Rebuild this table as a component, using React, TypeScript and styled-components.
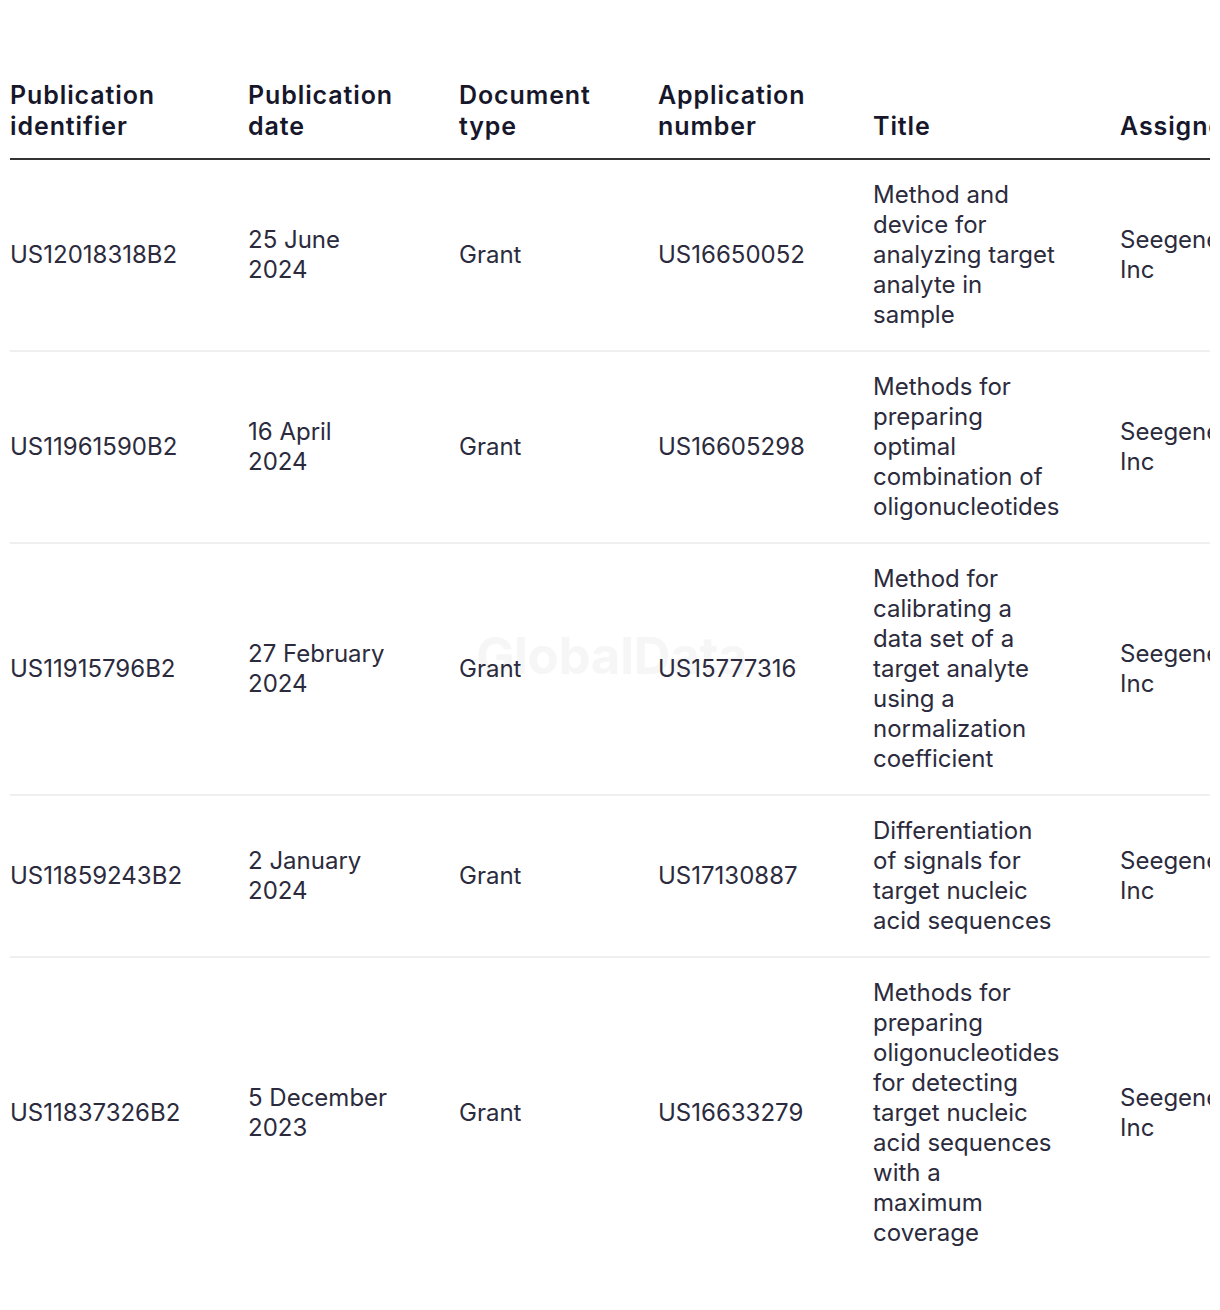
import React from "react";
import styled, { createGlobalStyle } from "styled-components";

const GlobalStyle = createGlobalStyle`
  html, body {
    margin: 0;
    padding: 0;
    background: #ffffff;
  }
  body {
    font-family: "Inter", "Liberation Sans", sans-serif;
    -webkit-font-smoothing: antialiased;
  }
`;

const Page = styled.div`
  position: relative;
  width: 1220px;
  padding: 80px 0 0 10px;
  box-sizing: border-box;
`;

const Scroller = styled.div`
  position: relative;
  width: 1200px;
  overflow: hidden;
`;

const Watermark = styled.div`
  position: absolute;
  left: 466px;
  top: 545px;
  font-family: "Inter", "Liberation Sans", sans-serif;
  font-weight: 700;
  font-size: 51px;
  letter-spacing: -0.3px;
  color: #f6f6f7;
  pointer-events: none;
  user-select: none;
  z-index: 0;
`;

const Table = styled.table`
  position: relative;
  z-index: 1;
  table-layout: fixed;
  border-collapse: collapse;
  width: 1310px;
`;

const Col = styled.col<{ $w: number }>`
  width: ${(p) => p.$w}px;
`;

const HeadCell = styled.th`
  text-align: left;
  vertical-align: bottom;
  padding: 0 40px 16px 0;
  font-size: 25px;
  line-height: 31px;
  font-weight: 600;
  letter-spacing: 0.9px;
  color: #17172b;
  border-bottom: 2px solid #333333;
`;

const Row = styled.tr`
  border-bottom: 2px solid #efefef;
  &:last-child {
    border-bottom: none;
  }
`;

const Cell = styled.td`
  vertical-align: middle;
  padding: 20px 62px 20px 0;
  font-size: 24px;
  line-height: 30px;
  font-weight: 400;
  color: #2b2b3d;
`;

const Line = styled.span`
  display: block;
  white-space: nowrap;
`;

type Patent = {
  id: string;
  date: string;
  type: string;
  app: string;
  title: string[];
  assignee: string;
};

const patents: Patent[] = [
  {
    id: "US12018318B2",
    date: "25 June 2024",
    type: "Grant",
    app: "US16650052",
    title: ["Method and", "device for", "analyzing target", "analyte in", "sample"],
    assignee: "Seegene Inc",
  },
  {
    id: "US11961590B2",
    date: "16 April 2024",
    type: "Grant",
    app: "US16605298",
    title: ["Methods for", "preparing", "optimal", "combination of", "oligonucleotides"],
    assignee: "Seegene Inc",
  },
  {
    id: "US11915796B2",
    date: "27 February 2024",
    type: "Grant",
    app: "US15777316",
    title: [
      "Method for",
      "calibrating a",
      "data set of a",
      "target analyte",
      "using a",
      "normalization",
      "coefficient",
    ],
    assignee: "Seegene Inc",
  },
  {
    id: "US11859243B2",
    date: "2 January 2024",
    type: "Grant",
    app: "US17130887",
    title: ["Differentiation", "of signals for", "target nucleic", "acid sequences"],
    assignee: "Seegene Inc",
  },
  {
    id: "US11837326B2",
    date: "5 December 2023",
    type: "Grant",
    app: "US16633279",
    title: [
      "Methods for",
      "preparing",
      "oligonucleotides",
      "for detecting",
      "target nucleic",
      "acid sequences",
      "with a",
      "maximum",
      "coverage",
    ],
    assignee: "Seegene Inc",
  },
];

const widths = [238, 211, 199, 215, 247, 200];

export default function App() {
  return (
    <>
      <GlobalStyle />
      <Page>
        <Scroller>
          <Watermark>GlobalData</Watermark>
          <Table>
            <colgroup>
              {widths.map((w, i) => (
                <Col key={i} $w={w} />
              ))}
            </colgroup>
            <thead>
              <tr>
                <HeadCell>Publication identifier</HeadCell>
                <HeadCell>Publication date</HeadCell>
                <HeadCell>Document type</HeadCell>
                <HeadCell>Application number</HeadCell>
                <HeadCell>Title</HeadCell>
                <HeadCell>Assignee</HeadCell>
              </tr>
            </thead>
            <tbody>
              {patents.map((p) => (
                <Row key={p.id}>
                  <Cell>{p.id}</Cell>
                  <Cell>{p.date}</Cell>
                  <Cell>{p.type}</Cell>
                  <Cell>{p.app}</Cell>
                  <Cell>
                    {p.title.map((l, i) => (
                      <Line key={i}>{l}</Line>
                    ))}
                  </Cell>
                  <Cell>{p.assignee}</Cell>
                </Row>
              ))}
            </tbody>
          </Table>
        </Scroller>
      </Page>
    </>
  );
}
